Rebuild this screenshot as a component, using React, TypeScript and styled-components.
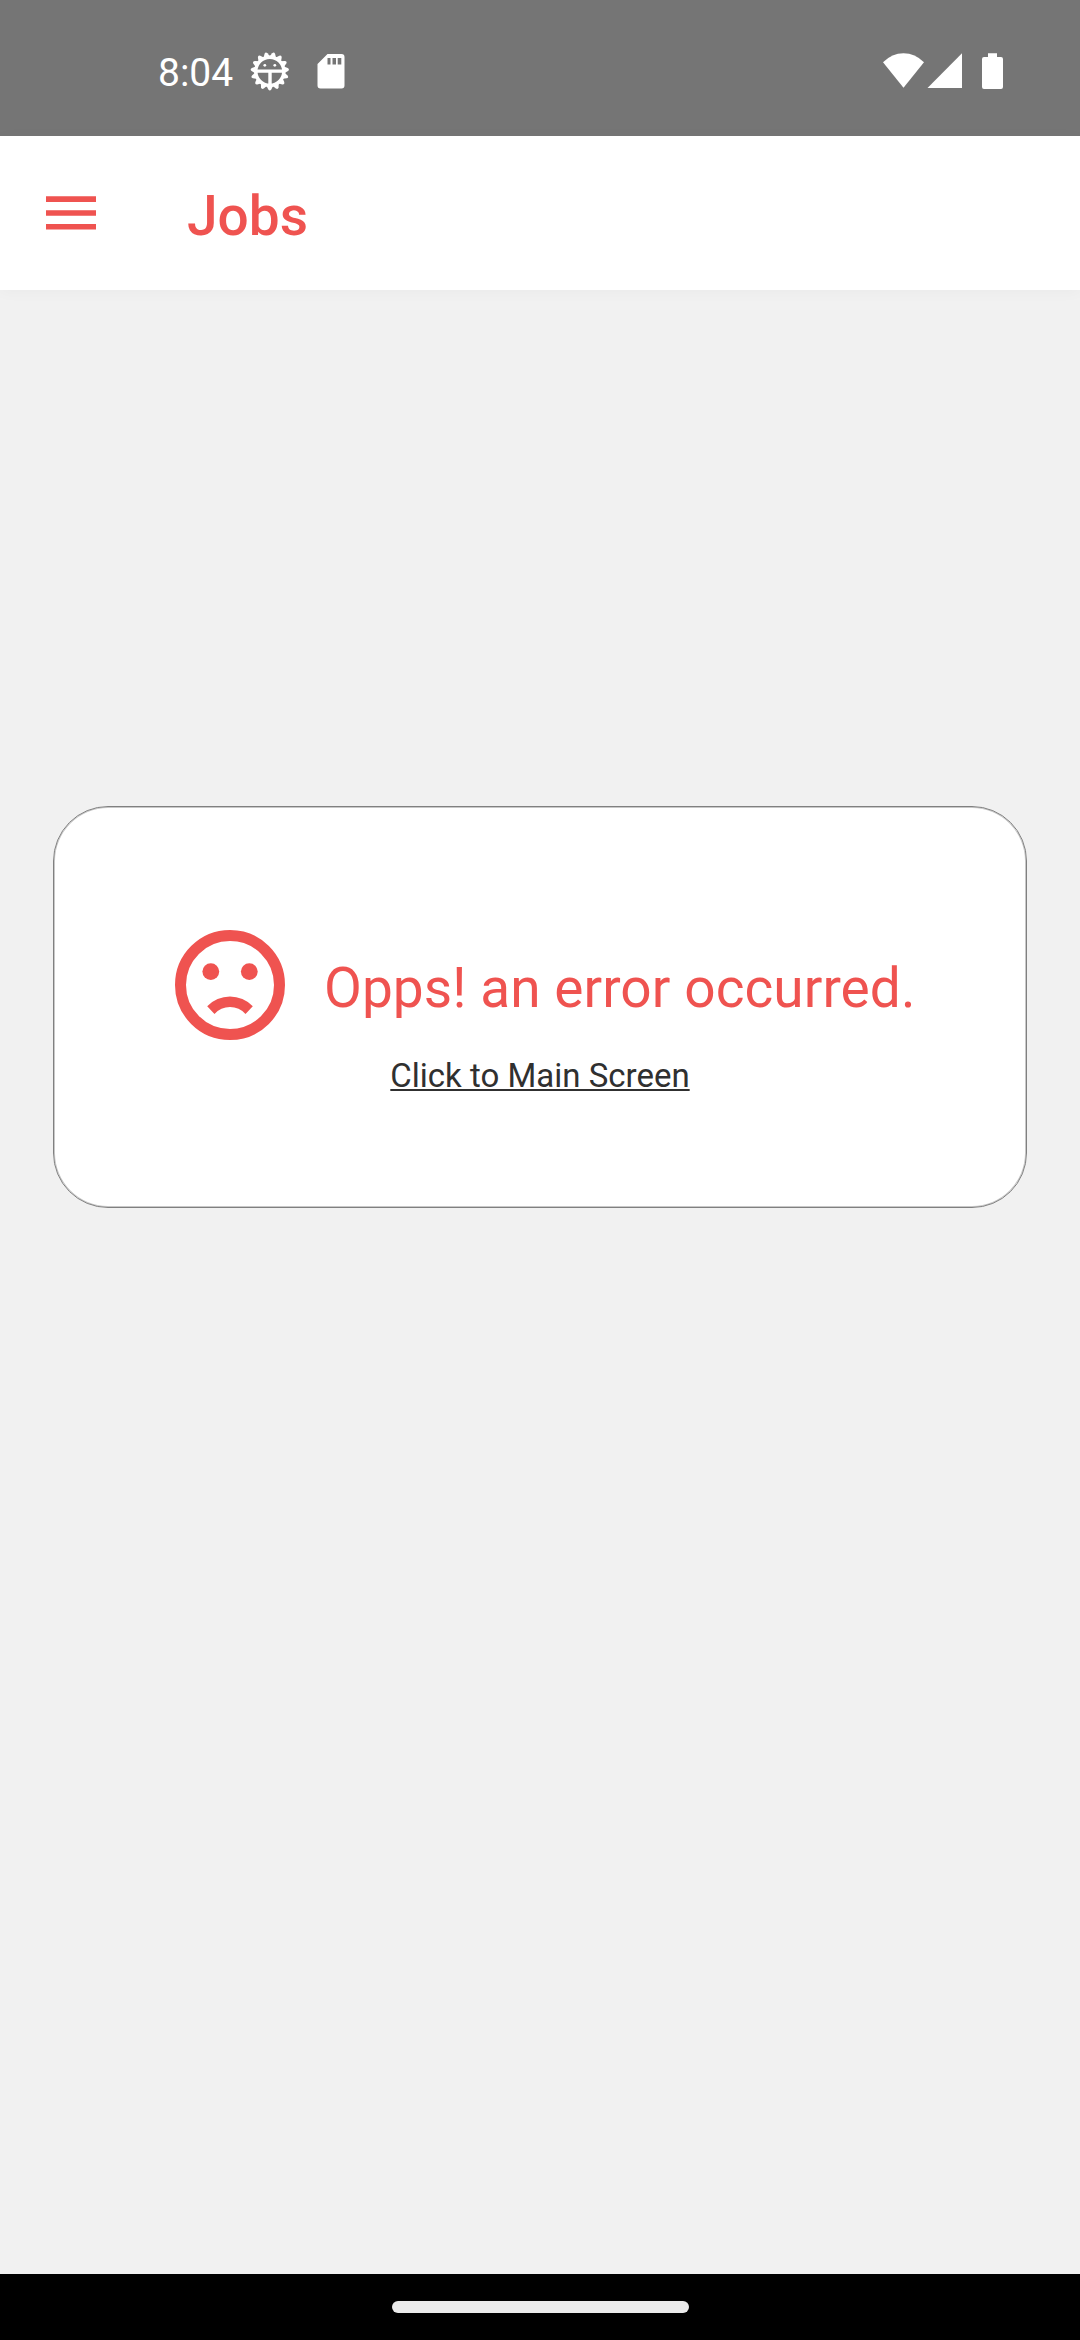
import React from "react";
import styled, { createGlobalStyle } from "styled-components";

const accent = "#ef5350";

const GlobalStyle = createGlobalStyle`
  * { box-sizing: border-box; }
  body { margin: 0; background: #f1f1f1; font-family: Roboto, "Noto Sans", sans-serif; }
  svg { display: block; flex: none; }
`;

const Screen = styled.div`
  display: flex;
  flex-direction: column;
  width: 1080px;
  height: 2340px;
  background: #f1f1f1;
  overflow: hidden;
`;

const StatusBar = styled.header`
  display: flex;
  justify-content: space-between;
  height: 136px;
  padding: 50px 76px 0 158px;
  background: #757575;
  color: #fff;
`;

const StatusGroup = styled.div`
  display: flex;
  height: 42px;
`;

const Clock = styled.span`
  width: 91px;
  font-size: 39px;
  line-height: 46px;
  white-space: nowrap;
`;

const AppBar = styled.div`
  display: flex;
  align-items: center;
  height: 154px;
  padding-left: 46px;
  background: #fff;
  box-shadow: 0 2px 14px rgba(0, 0, 0, 0.03);
`;

const MenuButton = styled.button`
  display: flex;
  padding: 0;
  border: 0;
  background: none;
  width: 141px;
`;

const Title = styled.h1`
  margin: 6px 0 0;
  color: ${accent};
  font-size: 55px;
  font-weight: 500;
  line-height: 64px;
`;

const Content = styled.main`
  flex: 1;
  padding: 516px 53px 0;
`;

const Card = styled.section`
  display: flex;
  flex-direction: column;
  align-items: center;
  height: 402px;
  padding-top: 122px;
  border: 1px solid #808080;
  border-radius: 55px;
  background: #fff;
  box-shadow: inset 0 0 0 1px #c8c8c8;
`;

const Message = styled.div`
  display: flex;
  width: 732px;
  gap: 38px;
`;

const MessageText = styled.p`
  margin: 27px 0 0;
  color: ${accent};
  font-size: 55px;
  line-height: 64px;
  letter-spacing: 0.06px;
  white-space: nowrap;
`;

const MainLink = styled.a`
  margin-top: 16px;
  color: #303030;
  font-size: 33px;
  line-height: 38px;
  text-decoration: underline;
  text-decoration-thickness: 2px;
  text-underline-offset: 2px;
  text-decoration-skip-ink: none;
  white-space: nowrap;
`;

const NavBar = styled.footer`
  display: flex;
  justify-content: center;
  height: 66px;
  padding-top: 27px;
  background: #000;
`;

const HomePill = styled.div`
  width: 297px;
  height: 12px;
  border-radius: 6px;
  background: #ebebeb;
`;

const teeth = Array.from({ length: 15 }, (_, i) => i * 24);

const DebugIcon = () => (
  <svg width="42" height="42" viewBox="248.5 50 42 42" fill="#fff">
    {teeth.map((angle) => (
      <path
        key={angle}
        d="M265.4 84.5L267.8 89.5Q269.3 91.6 270.8 89.5L273.2 84.5Z"
        transform={`rotate(${angle} 269.3 71.3)`}
      />
    ))}
    <circle cx="269.3" cy="71.3" r="14" fill="none" stroke="#fff" strokeWidth="3.4" />
    <path d="M256 69.5H283V72.8H271.2V85H267.8V72.8H256Z" />
    <circle cx="264.3" cy="65.3" r="1.4" />
    <circle cx="274.3" cy="65.3" r="1.4" />
  </svg>
);

const SdCardIcon = () => (
  <svg width="60" height="42" viewBox="290.5 50 60 42" fill="#fff">
    <path
      fillRule="evenodd"
      d="M327 54H341Q344 54 344 57V85.5Q344 88.5 341 88.5H320Q317 88.5 317 85.5V64ZM327 58V64.5H330V58ZM332 58V64.5H335.5V58ZM337.2 58V64.5H340.8V58Z"
    />
  </svg>
);

const SignalIcons = () => (
  <svg width="124" height="42" viewBox="880 50 124 42" fill="#fff">
    <path d="M883 62.3Q892 53.3 903.5 53.3T924 62.3L903.5 87.7Z" />
    <path d="M927.5 88L962 53.3V88Z" />
    <path d="M988 53.3H997V57H1001Q1003 57 1003 59V87Q1003 89 1001 89H984Q982 89 982 87V59Q982 57 984 57H988Z" />
  </svg>
);

const MenuIcon = () => (
  <svg width="50" height="34" viewBox="0 0 50 34" fill={accent}>
    <path d="M0 .3H50V6H0ZM0 14.2H50V19.8H0ZM0 28H50V33.6H0Z" />
  </svg>
);

const SadFace = () => (
  <svg width="112" height="112" viewBox="174 928 112 112" fill={accent}>
    <circle cx="230" cy="984" r="49.5" fill="none" stroke={accent} strokeWidth="11" />
    <circle cx="210.8" cy="970.6" r="8.4" />
    <circle cx="249.3" cy="970.6" r="8.4" />
    <path d="M207.2 1005.3A31.6 31.6 0 0 1 252.8 1005.3L245.5 1013A20.6 20.6 0 0 0 214.5 1013Z" />
  </svg>
);

export default function App() {
  return (
    <>
      <GlobalStyle />
      <Screen>
        <StatusBar>
          <StatusGroup>
            <Clock>8:04</Clock>
            <DebugIcon />
            <SdCardIcon />
          </StatusGroup>
          <StatusGroup>
            <SignalIcons />
          </StatusGroup>
        </StatusBar>
        <AppBar>
          <MenuButton aria-label="Menu">
            <MenuIcon />
          </MenuButton>
          <Title>Jobs</Title>
        </AppBar>
        <Content>
          <Card>
            <Message>
              <SadFace />
              <MessageText>Opps! an error occurred.</MessageText>
            </Message>
            <MainLink>Click to Main Screen</MainLink>
          </Card>
        </Content>
        <NavBar>
          <HomePill />
        </NavBar>
      </Screen>
    </>
  );
}
